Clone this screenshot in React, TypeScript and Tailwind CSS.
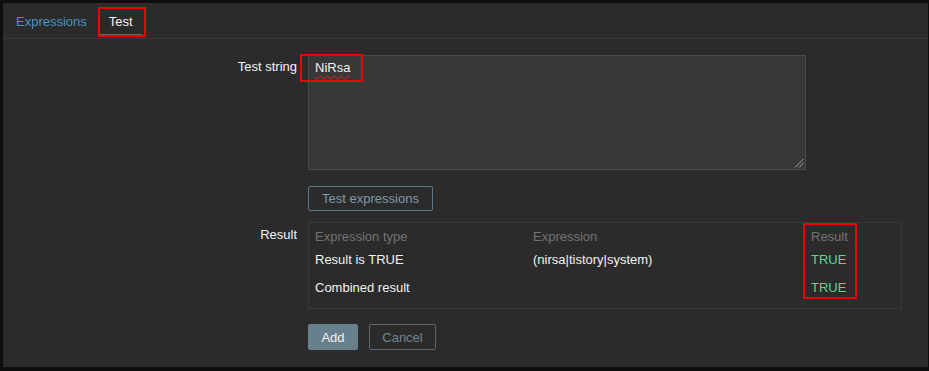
import React from 'react'

const rows = [
  { type: 'Result is TRUE', expr: '(nirsa|tistory|system)', result: 'TRUE', h: 'h-[29px]' },
  { type: 'Combined result', expr: '', result: 'TRUE', h: 'h-[26px]' },
]

export default function App() {
  return (
    <div className="w-[929px] h-[371px] bg-[#0e0e0e] pt-[3px] pl-[3px] pr-[1px] pb-[4px] font-['Liberation_Sans',Arial,sans-serif] text-[13px] leading-[15px] text-[#f2f2f2]">
      <div className="h-full bg-[#2b2b2b] flex flex-col">
        {/* Tabs */}
        <nav className="h-[36px] shrink-0 border-b border-[#383838] flex items-start pl-[13px]">
          <a className="h-[33px] pt-[11px] text-[#4796c4] cursor-pointer">Expressions</a>
          <div className="relative ml-[13px] h-[33px] px-[9px] pt-[6px] flex items-center border-b-2 border-[#666666]">
            <span>Test</span>
            <span className="absolute left-[-2px] top-[4px] w-[48px] h-[30px] border-2 border-[#f00000]" />
          </div>
        </nav>

        {/* Form */}
        <div className="flex flex-col">
          <div className="flex mt-[16px]">
            <label className="w-[294px] text-right pt-[4px]">Test string</label>
            <div className="relative ml-[11px] w-[498px] h-[115px] bg-[#383838] border border-[#4a4a4a] pl-[6px] pt-[4px]">
              <span className="underline decoration-wavy decoration-[#e02424] decoration-1 underline-offset-[3px]">
                NiRsa
              </span>
              <span className="absolute left-[-9px] top-[-2px] w-[63px] h-[28px] border-2 border-[#f00000]" />
              <svg className="absolute right-[1px] bottom-[1px]" width="10" height="10" viewBox="0 0 10 10">
                <line x1="1" y1="9.5" x2="9.5" y2="1" stroke="#a0a0a0" strokeWidth="1" />
                <line x1="5" y1="9.5" x2="9.5" y2="5" stroke="#a0a0a0" strokeWidth="1" />
              </svg>
            </div>
          </div>

          <div className="flex mt-[16px]">
            <div className="w-[294px]" />
            <button className="ml-[11px] w-[125px] h-[25px] border border-[#5f7786] rounded-[2px] text-[#7f9aaa]">
              Test expressions
            </button>
          </div>

          <div className="flex mt-[11px]">
            <label className="w-[294px] text-right pt-[5px]">Result</label>
            <div className="relative ml-[11px] w-[594px] h-[87px] border border-[#383838] pt-[4px] pb-[8px] pl-[6px]">
              <div className="flex h-[18px] items-center text-[#737373]">
                <div className="w-[218px]">Expression type</div>
                <div className="w-[278px]">Expression</div>
                <div>Result</div>
              </div>
              {rows.map((r) => (
                <div key={r.type} className={`flex items-center ${r.h}`}>
                  <div className="w-[218px]">{r.type}</div>
                  <div className="w-[278px]">{r.expr}</div>
                  <div className="text-[#5bd68a]">{r.result}</div>
                </div>
              ))}
              <span className="absolute left-[494px] top-0 w-[54px] h-[76px] border-2 border-[#f00000]" />
            </div>
          </div>

          <div className="flex mt-[15px]">
            <div className="w-[294px]" />
            <div className="ml-[11px] flex gap-[11px]">
              <button className="w-[50px] h-[26px] bg-[#66808e] rounded-[2px] text-[#f2f2f2]">Add</button>
              <button className="w-[67px] h-[26px] border border-[#586771] rounded-[2px] text-[#6f8794]">
                Cancel
              </button>
            </div>
          </div>
        </div>
      </div>
    </div>
  )
}
